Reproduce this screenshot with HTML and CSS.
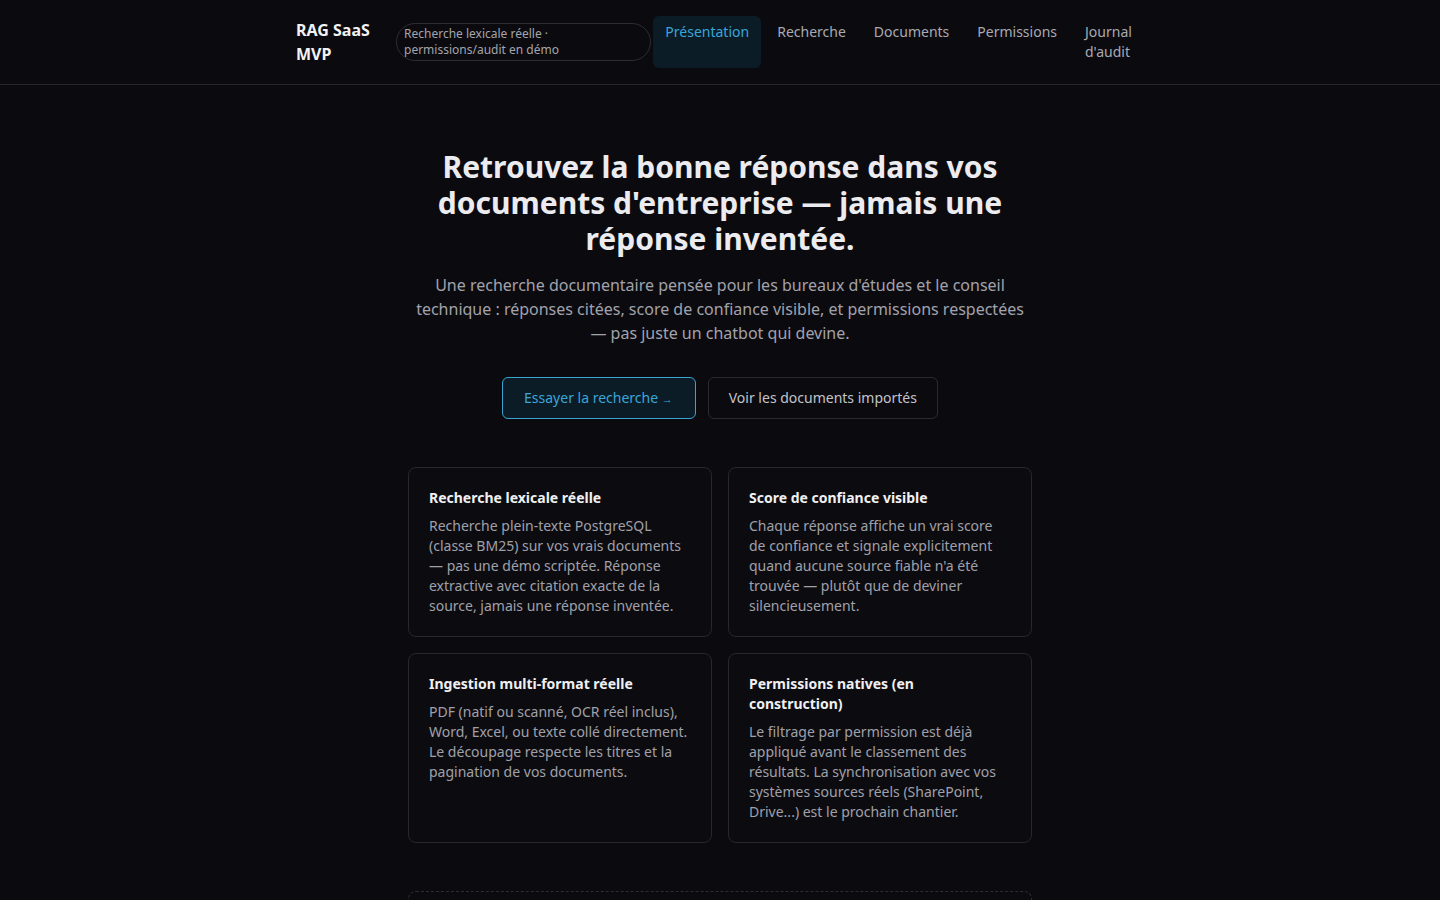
FILE: index.html
```html
<!DOCTYPE html>
<html lang="fr">
<head>
<meta charset="utf-8">
<title>RAG SaaS MVP</title>
<link rel="stylesheet" href="styles.css">
</head>
<body>
<header class="topbar">
  <div class="topbar-inner">
    <div class="brand">RAG SaaS MVP</div>
    <div class="pill">Recherche lexicale réelle · permissions/audit en démo</div>
    <nav class="nav">
      <a class="nav-item active" href="#">Présentation</a>
      <a class="nav-item" href="#">Recherche</a>
      <a class="nav-item" href="#">Documents</a>
      <a class="nav-item" href="#">Permissions</a>
      <a class="nav-item narrow" href="#">Journal d'audit</a>
    </nav>
  </div>
</header>
<main class="main">
  <section class="hero">
    <h1 class="hero-title">Retrouvez la bonne réponse dans vos documents d'entreprise — jamais une réponse inventée.</h1>
    <p class="hero-sub">Une recherche documentaire pensée pour les bureaux d'études et le conseil technique : réponses citées, score de confiance visible, et permissions respectées — pas juste un chatbot qui devine.</p>
    <div class="actions">
      <a class="btn btn-primary" href="#">Essayer la recherche <span class="arrow">→</span></a>
      <a class="btn btn-secondary" href="#">Voir les documents importés</a>
    </div>
  </section>
  <section class="features">
    <article class="card">
      <h3 class="card-title">Recherche lexicale réelle</h3>
      <p class="card-text">Recherche plein-texte PostgreSQL (classe BM25) sur vos vrais documents — pas une démo scriptée. Réponse extractive avec citation exacte de la source, jamais une réponse inventée.</p>
    </article>
    <article class="card">
      <h3 class="card-title">Score de confiance visible</h3>
      <p class="card-text">Chaque réponse affiche un vrai score de confiance et signale explicitement quand aucune source fiable n'a été trouvée — plutôt que de deviner silencieusement.</p>
    </article>
    <article class="card">
      <h3 class="card-title">Ingestion multi-format réelle</h3>
      <p class="card-text">PDF (natif ou scanné, OCR réel inclus), Word, Excel, ou texte collé directement. Le découpage respecte les titres et la pagination de vos documents.</p>
    </article>
    <article class="card">
      <h3 class="card-title">Permissions natives (en construction)</h3>
      <p class="card-text">Le filtrage par permission est déjà appliqué avant le classement des résultats. La synchronisation avec vos systèmes sources réels (SharePoint, Drive...) est le prochain chantier.</p>
    </article>
  </section>
  <section class="note">
    <h3 class="card-title">Ce qui est encore en démo</h3>
    <p class="card-text">Les permissions et le journal d'audit utilisent des données de démonstration.</p>
  </section>
</main>
</body>
</html>
```

FILE: styles.css
```css
* { box-sizing: border-box; }
html, body { margin: 0; padding: 0; }
body {
  background: #0b0b0f;
  color: #e6e6ea;
  font-family: "Noto Sans", "Open Sans", "Liberation Sans", sans-serif;
  font-size: 14px;
  line-height: 20px;
}
a { text-decoration: none; color: inherit; }

.topbar {
  border-bottom: 1px solid #26262c;
  background: #0b0b0f;
}
.topbar-inner {
  width: 848px;
  margin: 0 auto;
  padding: 16px 0;
  display: flex;
  align-items: center;
}
.brand {
  width: 78px;
  margin-right: 22px;
  font-weight: 700;
  font-size: 16px;
  line-height: 24px;
  color: #f2f2f4;
}
.pill {
  width: 255px;
  border: 1px solid #2c2c32;
  border-radius: 999px;
  padding: 2px 8px 2px 7px;
  font-size: 12px;
  line-height: 16px;
  color: #a4a4ad;
}
.nav {
  margin-left: auto;
  margin-right: 1px;
  display: flex;
  align-items: stretch;
  gap: 4px;
}
.nav-item {
  padding: 6px 12px;
  border-radius: 6px;
  color: #a9a9b3;
  font-size: 14px;
  line-height: 20px;
}
.nav-item.active {
  background: #0b1c26;
  color: #3aa6d8;
}
.nav-item.narrow { width: 70px; }

.main {
  width: 624px;
  margin: 0 auto;
  padding-top: 64px;
}
.hero { text-align: center; }
.hero-title {
  margin: 0;
  font-size: 30px;
  line-height: 36px;
  font-weight: 700;
  color: #ececf0;
}
.hero-sub {
  margin: 16px 0 0;
  font-size: 16px;
  line-height: 24px;
  color: #a2a2ac;
}
.actions {
  margin-top: 32px;
  display: flex;
  justify-content: center;
  gap: 12px;
}
.btn {
  display: inline-block;
  padding: 10px 20px;
  border-radius: 6px;
  font-size: 14px;
  line-height: 19px;
  border: 1px solid #2a2a31;
}
.btn-primary {
  padding: 10px 22px 10px 21px;
  border-color: #3aa3d3;
  background: #0b1c26;
  color: #3aa6d8;
}
.btn-primary .arrow { font-size: 11px; }
.btn-secondary {
  color: #c3c3cb;
  background: #0b0b0f;
}

.features {
  margin-top: 48px;
  display: grid;
  grid-template-columns: 1fr 1fr;
  gap: 16px;
}
.card {
  border: 1px solid #27272d;
  border-radius: 8px;
  background: #0c0c10;
  padding: 20px;
}
.card-title {
  margin: 0 0 8px;
  font-size: 14px;
  line-height: 20px;
  font-weight: 700;
  color: #f0f0f3;
}
.card-text {
  margin: 0;
  font-size: 14px;
  line-height: 20px;
  color: #a0a0aa;
}
.note {
  margin-top: 48px;
  border: 1px dashed #2c2c33;
  border-radius: 8px;
  padding: 20px;
  margin-bottom: 48px;
}
```
